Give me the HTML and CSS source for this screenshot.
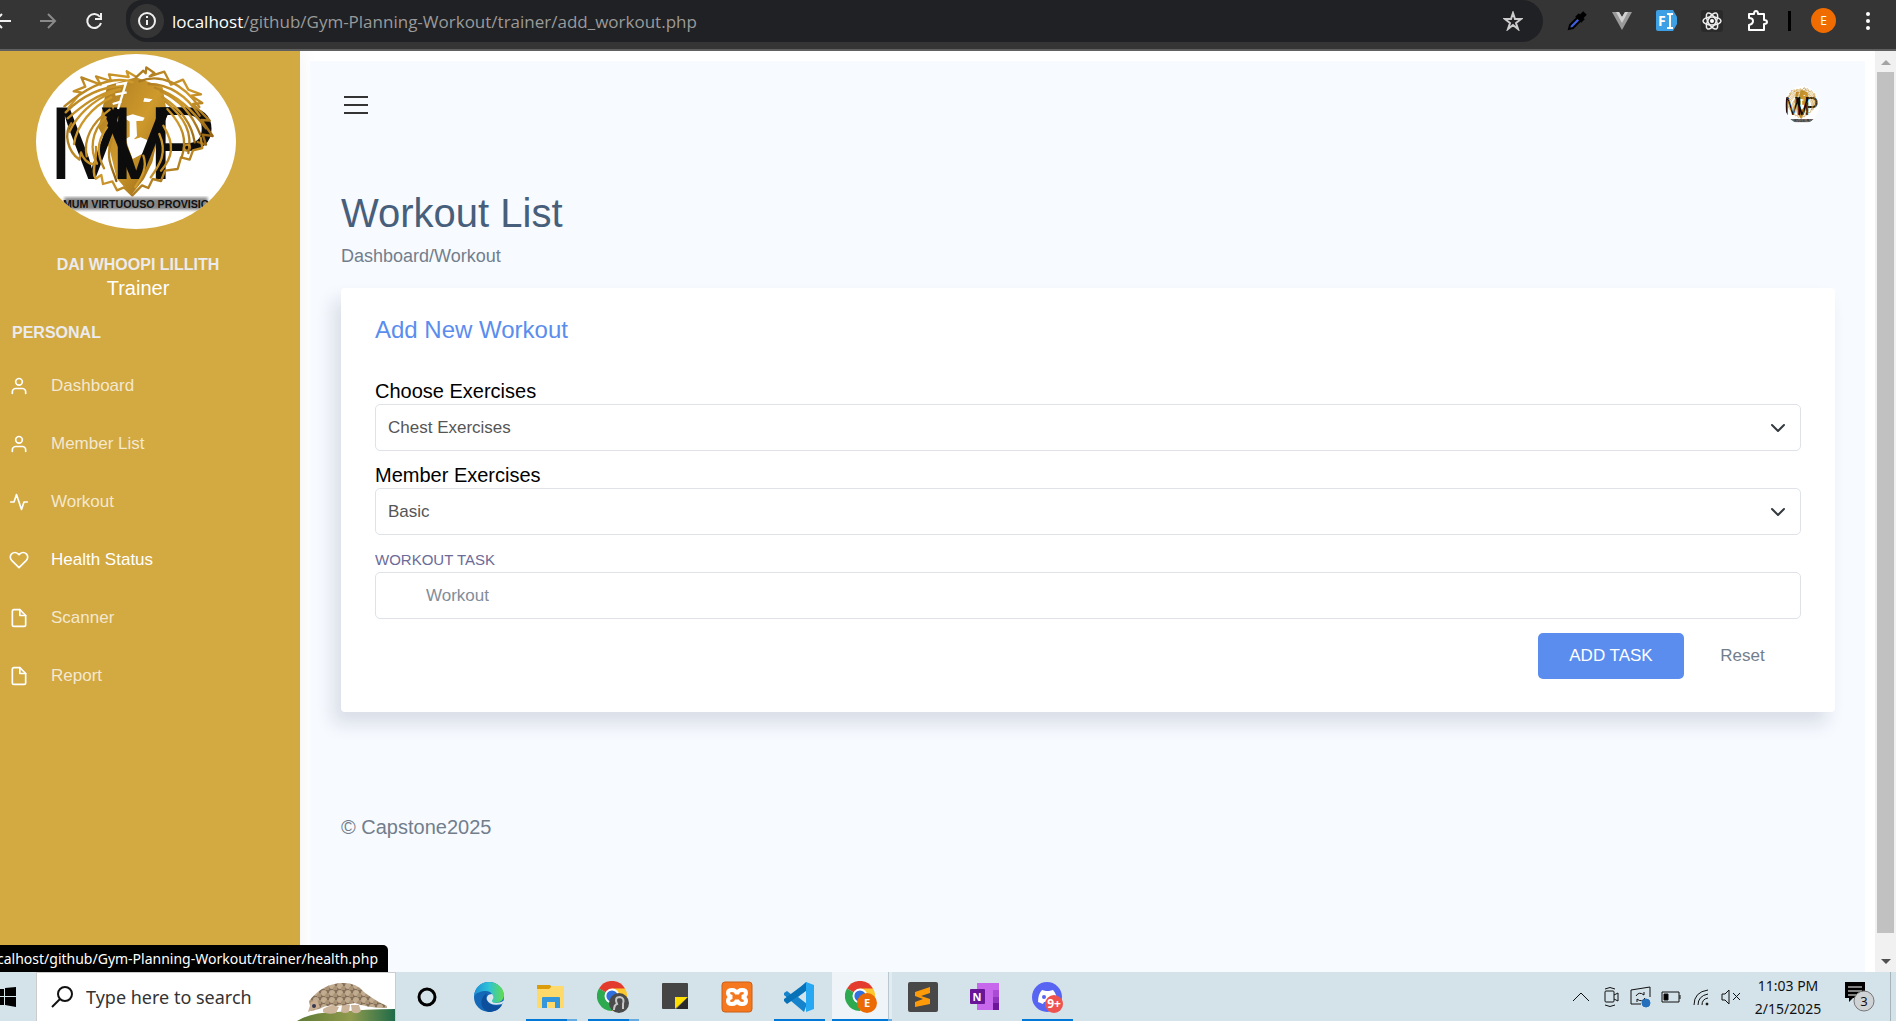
FILE: index.html
```html
<!DOCTYPE html>
<html lang="en">
<head>
<meta charset="utf-8">
<title>Workout List</title>
<link rel="stylesheet" href="styles.css">
</head>
<body>
<svg class="defs" aria-hidden="true">
  <defs>
    <linearGradient id="gold" x1="0" y1="0" x2="1" y2="1"><stop offset="0" stop-color="#a8781f"/><stop offset=".5" stop-color="#cf9a2c"/><stop offset="1" stop-color="#8d5d12"/></linearGradient>
    <linearGradient id="edgeTop" x1="0" y1="0" x2="1" y2="0"><stop offset="0" stop-color="#1b8fd8"/><stop offset=".5" stop-color="#2fc3d6"/><stop offset="1" stop-color="#62dc4c"/></linearGradient>
    <linearGradient id="hill" x1="0" y1="0" x2="1" y2="0"><stop offset="0" stop-color="#5d7a34"/><stop offset=".55" stop-color="#8f9a4d"/><stop offset="1" stop-color="#1f6b48"/></linearGradient>
    <pattern id="scales" width="8" height="7" patternUnits="userSpaceOnUse"><rect width="8" height="7" fill="#84705a"/><ellipse cx="3" cy="3" rx="3" ry="3" fill="#c2ac8f"/><ellipse cx="7" cy="6" rx="3" ry="3" fill="#a99275"/></pattern>
    <filter id="soft"><feGaussianBlur stdDeviation="5"/></filter>
    <symbol id="user" viewBox="0 0 24 24"><path d="M20 21v-2a4 4 0 0 0-4-4H8a4 4 0 0 0-4 4v2"/><circle cx="12" cy="7" r="4"/></symbol>
    <symbol id="file" viewBox="0 0 24 24"><path d="M13 2H6a2 2 0 0 0-2 2v16a2 2 0 0 0 2 2h12a2 2 0 0 0 2-2V9z"/><path d="M13 2v7h7"/></symbol>
    <symbol id="down" viewBox="0 0 16 16"><path d="m2 5 6 6 6-6"/></symbol>
    <symbol id="chrome" viewBox="0 0 32 32">
      <path d="M16 16 2.100 8A16 16 0 0 1 29.900 8z" fill="#e33b2e"/><path d="M16 16 2.100 8A16 16 0 0 0 16 32l7-12z" fill="#2da94f"/><path d="M16 8h13.900A16 16 0 0 1 16 32l7-12z" fill="#fdc82f"/>
      <circle cx="16" cy="16" r="8" fill="#fff"/><circle cx="16" cy="16" r="6" fill="#2f6fe0"/>
    </symbol>
    <symbol id="lion" viewBox="0 0 600 525">
      <rect width="600" height="525" fill="#fff"/>
      <path fill="url(#gold)" d="M213 95 300 70l80 30 14 85-25 50-20 90-25 50-38 48-44-50-22-90-32-60z"/>
      <path fill="#fff" d="m262 190 28-9 36 10-5 9-20 1 2 45-12 12-10-12v-43zM270 255l12-8 14 9 18-6 20 8-4 35-40 22-12-32zM325 132l25 4-10 8-18-1z"/>
      <g class="monogram"><text x="36" y="374">M</text><text x="196" y="374">V</text><text x="334" y="374">P</text></g>
      <g fill="none" stroke="url(#gold)" stroke-width="7" stroke-linecap="round" stroke-linejoin="round">
        <path d="m300 68-28-16 6 17-59-8 6 20-45-14 14 25-58-22 12 28-35 14 22 3-38 47"/>
        <path d="m300 70 22-20 7 8 2-18 24 17-14 10 44-14 20 39 36-15 16 30 38 14-30 4 34 22-28 3 50 50-25-2 34 48-30-4 10 30-25-8"/>
        <path d="M290 85c-55-20-120 0-205 72M270 93c-70 4-130 30-181 82M252 105c-73 16-113 50-157 88M233 114c-64 24-110 72-133 119M226 130c-58 28-104 84-112 140"/>
        <path d="M221 167c-64 48-77 98-69 140M209 190c-44 42-48 98-26 139M213 220c-37 49-26 90-9 123M228 255c-23 57 3 90 13 126"/>
        <path d="M106 208c-24 30-11 84 24 109l5-22c5 17 19 35 40 36M180 279c4 42-16 72-1 95l17-11 5 27 28-8 14 27 21-9 25 24 29-30 19 8 13-27 25 6 12-31 38-5 10-35 26 7 10-28 28-7-5-31"/>
        <path d="M310 82c65-26 130 7 180 77M338 90c65 1 115 37 153 95M356 101c67 22 112 66 154 122M374 112c66 28 99 79 119 130M378 128c54 35 90 81 98 137"/>
        <path d="M388 142c60 50 82 95 69 155M394 165c49 52 60 95 43 145M382 215c37 59 26 98-7 135M370 240c25 58 2 91-26 130M322 305c13 35-5 66-24 94"/>
        <circle cx="453" cy="281" r="9"/>
      </g>
      <path d="m240 92 30-5-24 78M238 122l34-7M230 150l27-8" fill="none" stroke="#fff" stroke-width="7"/>
      <rect x="85" y="430" width="430" height="38" fill="#555" opacity=".7" filter="url(#soft)"/>
      <text class="motto" x="300" y="463">MUM VIRTUOUSO PROVISIO</text>
    </symbol>
  </defs>
</svg>

<header class="browser">
  <nav class="browser-nav" aria-label="Browser">
    <button class="icon-button" aria-label="Back"><svg width="20" height="20" viewBox="0 0 20 20"><path d="M19 10H3M10 3l-7 7 7 7"/></svg></button>
    <button class="icon-button dim" aria-label="Forward"><svg width="20" height="20" viewBox="0 0 20 20"><path d="M2 10h15M10 3l7 7-7 7"/></svg></button>
    <button class="icon-button" aria-label="Reload"><svg width="20" height="20" viewBox="0 0 20 20"><path d="M16 6a7 7 0 1 0 1 6M17 2v6h-6"/></svg></button>
  </nav>
  <div class="address">
    <span class="site-info"><svg width="20" height="20" viewBox="0 0 20 20"><circle cx="10" cy="10" r="8"/><path d="M10 9v5M10 5v2"/></svg></span>
    <span class="url"><b>localhost</b>/github/Gym-Planning-Workout/trainer/add_workout.php</span>
    <svg class="star" width="20" height="20" viewBox="0 0 20 20"><path d="m10 2 2 6h6l-5 4 2 6-5-4-5 4 2-6-5-4h6z"/></svg>
  </div>
  <div class="extensions">
    <svg width="22" height="22" viewBox="0 0 22 22"><path d="m3 19 1-4 8-8 3 3-8 8z" fill="#3f5fe0" stroke="#000" stroke-width="2"/><path d="m11 5 6 6M14 8l5-5" stroke="#000" stroke-width="5"/></svg>
    <svg width="22" height="22" viewBox="0 0 22 22"><path d="M1 2h7l3 5 3-5h7L11 20z" fill="#9a9a9a"/><path d="M5 2h3l3 5 3-5h3l-6 11z" fill="#d0d0d0"/></svg>
    <svg width="22" height="22" viewBox="0 0 22 22"><path d="M2 0h15l4 7v7l-4 7H2q-2 0-2-2V2q0-2 2-2z" fill="#3ea0e4"/><text x="2" y="16" class="ext-letter">F</text><path d="M11 4h2l1 1 1-1h2M14 5v12M11 18h2l1-1 1 1h2" fill="none" stroke="#fff" stroke-width="2"/></svg>
    <svg width="22" height="22" viewBox="0 0 22 22"><rect width="22" height="22" rx="3" fill="#2a2a2a"/><g fill="none" stroke="#eee" stroke-width="1.500"><ellipse cx="11" cy="11" rx="9" ry="4"/><ellipse cx="11" cy="11" rx="9" ry="4" transform="rotate(60 11 11)"/><ellipse cx="11" cy="11" rx="9" ry="4" transform="rotate(120 11 11)"/></g><circle cx="11" cy="11" r="2" fill="#fff"/></svg>
    <svg width="22" height="22" viewBox="0 0 22 22"><path d="M3 4h5q0-3 2-3t2 3h6v6q3 0 3 2t-3 2v6H3v-5q4-1 4-4T3 8z" fill="none" stroke="#fff" stroke-width="2" stroke-linejoin="round"/></svg>
  </div>
  <span class="divider"></span>
  <span class="profile">E</span>
  <svg class="kebab" width="6" height="20" viewBox="0 0 6 20"><circle cx="3" cy="3" r="2"/><circle cx="3" cy="10" r="2"/><circle cx="3" cy="17" r="2"/></svg>
</header>

<div class="viewport">
  <aside class="sidebar">
    <div class="trainer">
      <svg class="portrait" viewBox="0 0 600 525" role="img" aria-label="Logo"><use href="#lion"/></svg>
      <strong>DAI WHOOPI LILLITH</strong>
      <span>Trainer</span>
    </div>
    <h2>PERSONAL</h2>
    <nav class="menu" aria-label="Personal">
      <a href="#"><svg viewBox="0 0 24 24"><use href="#user"/></svg>Dashboard</a>
      <a href="#"><svg viewBox="0 0 24 24"><use href="#user"/></svg>Member List</a>
      <a href="#"><svg viewBox="0 0 24 24"><path d="M22 12h-4l-3 9L9 3l-3 9H2"/></svg>Workout</a>
      <a href="#" class="hovered"><svg viewBox="0 0 24 24"><path d="M20.840 4.610a5.500 5.500 0 0 0-7.780 0L12 5.670l-1.060-1.060a5.500 5.500 0 0 0-7.780 7.780L12 21.230l8.840-8.840a5.500 5.500 0 0 0 0-7.780z"/></svg>Health Status</a>
      <a href="#"><svg viewBox="0 0 24 24"><use href="#file"/></svg>Scanner</a>
      <a href="#"><svg viewBox="0 0 24 24"><use href="#file"/></svg>Report</a>
    </nav>
  </aside>
  <main class="page">
    <div class="topbar">
      <button class="hamburger" aria-label="Toggle menu"><svg width="26" height="20" viewBox="0 0 26 20"><path d="M1 2h24M1 10h24M1 18h24"/></svg></button>
      <svg class="avatar" viewBox="50 20 500 470" preserveAspectRatio="none" role="img" aria-label="Account"><use href="#lion" width="600" height="525"/></svg>
    </div>
    <h1>Workout List</h1>
    <p class="crumbs">Dashboard/Workout</p>
    <form class="card">
      <h3>Add New Workout</h3>
      <label for="exercise">Choose Exercises</label>
      <div class="select"><select id="exercise"><option>Chest Exercises</option></select><svg width="16" height="16"><use href="#down"/></svg></div>
      <label for="level">Member Exercises</label>
      <div class="select"><select id="level"><option>Basic</option></select><svg width="16" height="16"><use href="#down"/></svg></div>
      <label for="task" class="small-label">WORKOUT TASK</label>
      <input id="task" type="text" placeholder="Workout">
      <div class="actions"><button type="button" class="primary">ADD TASK</button><button type="reset" class="plain">Reset</button></div>
    </form>
    <footer>© Capstone2025</footer>
  </main>
  <div class="scrollbar" aria-hidden="true">
    <svg width="10" height="5" viewBox="0 0 10 5"><path d="m0 5 5-5 5 5z" fill="#a3a3a3"/></svg>
    <span class="thumb"></span>
    <svg width="10" height="5" viewBox="0 0 10 5"><path d="m0 0 5 5 5-5z" fill="#505050"/></svg>
  </div>
  <div class="status"><span>calhost/github/Gym-Planning-Workout/trainer/health.php</span></div>
</div>

<footer class="taskbar">
  <button class="start" aria-label="Start"><svg width="16" height="20" viewBox="0 0 16 20"><path d="M0 2h4v7H0zM5 1l11-1v9H5zM0 10h4v8H0zM5 10h11v10L5 18z"/></svg></button>
  <label class="search"><svg width="22" height="22" viewBox="0 0 22 22"><circle cx="14" cy="8" r="7"/><path d="m9 13-8 8"/></svg><input type="search" placeholder="Type here to search">
    <svg class="pangolin" width="98" height="38" viewBox="0 0 98 38"><path d="M0 38q14-9 40-9 30-3 58-3v12z" fill="url(#hill)"/><path d="M26 26q8-6 16-2l-3 6q-8 2-13-1zM45 22h8l-1 7q-4 2-8 0zM54 22h8l2 6q-4 4-9 1z" fill="#cdb59b"/><path d="M12 18Q26 0 46 0q14 0 21 9 10 8 23 14v2q-20 0-32-5-12 3-20 3-8-2-16 3l-8 2z" fill="url(#scales)"/><path d="m11 29 3-10 6-2 3 7z" fill="#c9ae91"/><circle cx="17" cy="23" r="2" fill="#333852"/></svg>
  </label>
  <div class="apps">
    <button aria-label="Cortana"><svg viewBox="0 0 32 32"><circle cx="16" cy="16" r="8" fill="none" stroke="#000" stroke-width="3"/></svg></button>
    <button aria-label="Edge"><svg viewBox="0 0 32 32"><circle cx="16" cy="16" r="15" fill="#1468b8"/><path d="M1 15C2 6 8 1 16 1s15 6 15 13c0 5-4 8-9 8-4 0-5-2-3-4 2-4-1-8-6-8S3 12 1 15z" fill="url(#edgeTop)"/><path d="M14 12c-3 7 2 15 15 12-3 5-8 7-13 7-8-2-11-13-2-19z" fill="#0c4f9c"/><path d="M19 13c-4 0-6 3-5 6 2 4 7 6 15 4l3-4c-3 2-6 3-9 3-4 0-5-2-3-4 1-2 0-4-1-5z" fill="#dbe7ec"/></svg></button>
    <button aria-label="File Explorer" class="open many"><svg viewBox="0 0 32 32"><path d="M2 4h13l3 4H2z" fill="#dc9b08"/><path d="M2 8h12l3-3h12v22H2z" fill="#ffd969"/><path d="M7 27V17q0-1 1-1h16q1 0 1 1v10h-5v-6h-8v6z" fill="#3696dc"/></svg></button>
    <button aria-label="Chrome" class="open many"><svg viewBox="0 0 32 32"><use href="#chrome" x="0" y="0" width="30" height="30"/><circle cx="22" cy="22" r="10" fill="#4b4b4b"/><path d="M17 29q0-5 3-6-3-7 3-7 5 1 3 7v5" fill="none" stroke="#c6c6c6" stroke-width="2"/></svg></button>
    <button aria-label="Sticky Notes"><svg viewBox="0 0 32 32"><path d="M4 2h24q1 0 1 1v13L17 28H4q-1 0-1-1V3q0-1 1-1z" fill="#454545"/><path d="M16 28V16h13z" fill="#ffe000"/><path d="M29 16v12H17z" fill="#2b2b2b"/></svg></button>
    <button aria-label="XAMPP"><svg viewBox="0 0 32 32"><rect x="1" y="1" width="30" height="30" rx="3" fill="#f5781f" stroke="#c95f18"/><path d="M11 9q-4 0-4 3t4 4q-4 1-4 4t4 3 5-4q1 4 5 4t4-3-4-4q4-1 4-4t-4-3-5 4q-1-4-5-4z" fill="none" stroke="#fff" stroke-width="4"/></svg></button>
    <button aria-label="Visual Studio Code" class="open"><svg viewBox="0 0 32 32"><path d="M23 1 9 14 4 10 1 12v2l20 17 3-8-9-7 9-7z" fill="#1684cd"/><path d="m1 20 3 3L24 9V1L1 18z" fill="#0872b8"/><path d="m23 1 8 3v24l-8 3z" fill="#27a8f2"/></svg></button>
    <button aria-label="Chrome, profile E" class="open many active"><svg viewBox="0 0 32 32"><use href="#chrome" x="0" y="0" width="30" height="30"/><circle cx="22" cy="22" r="10" fill="#ec6a04"/><text x="22" y="26" class="badge-letter">E</text></svg></button>
    <button aria-label="Sublime Text"><svg viewBox="0 0 32 32"><rect x="1" y="1" width="30" height="30" rx="2" fill="#484848"/><path d="m8 11 15-5v6l-9 3 9 3v5L8 26v-5l8-3-8-3z" fill="#ff9a08"/></svg></button>
    <button aria-label="OneNote"><svg viewBox="0 0 32 32"><path d="M8 2h22v27H8z" fill="#c767eb"/><path d="M24 9h6v7h-6z" fill="#a94bd4"/><path d="M24 16h6v7h-6z" fill="#8e35be"/><path d="M24 22h6v7h-6z" fill="#6c169a"/><rect x="1" y="8" width="15" height="15" rx="1" fill="#6a1598"/><text x="8" y="20" class="badge-letter">N</text></svg></button>
    <button aria-label="Discord" class="open"><svg viewBox="0 0 32 32"><circle cx="16" cy="16" r="15" fill="#5865f2"/><path d="M7 21q0-8 4-12l4 1h3l4-1q4 4 4 12l-5 2-1-2h-7l-1 2z" fill="#fff"/><circle cx="13" cy="16" r="2" fill="#5865f2"/><circle cx="23" cy="23" r="9" fill="#ef5350"/><text x="23" y="27" class="badge-count">9+</text></svg></button>
  </div>
  <div class="tray">
    <svg viewBox="0 0 22 22"><path d="m3 15 8-8 8 8"/></svg>
    <svg viewBox="0 0 22 22"><rect x="5" y="5" width="9" height="11" rx="1"/><path d="m14 9 4-2v8l-4-2M5 3q5-3 10 0M5 19q5 3 10 0"/></svg>
    <svg viewBox="0 0 22 22"><path d="M11 18H1V4l19-3v10"/><path d="M6 10q3-5 8-1V6M15 12q-3 5-8 1v3"/><circle cx="16" cy="17" r="4" fill="#2570bd" stroke="#2570bd"/></svg>
    <svg viewBox="0 0 22 22"><path d="M2 6h17v10H2zM20 9v4"/><path d="M4 8h4v6H4z" fill="#000"/></svg>
    <svg viewBox="0 0 22 22"><path d="M4 19Q4 6 18 4M8 19q0-9 10-11M12 19q0-6 6-7"/><circle cx="17" cy="18" r="1" fill="#000"/></svg>
    <svg viewBox="0 0 22 22"><path d="M2 8h3l4-4v14l-4-4H2zM13 7l7 7M20 7l-7 7"/></svg>
    <div class="clock"><span>11:03 PM</span><span>2/15/2025</span></div>
    <svg class="notes" viewBox="0 0 32 32"><path d="M1 1h20v16H9l-4 4v-4H1z" fill="#000" stroke="none"/><path d="M4 6h14M4 10h14M4 14h8" stroke="#fff"/><circle cx="20" cy="20" r="10" fill="#cfd3d6" stroke="#777"/><text x="20" y="25" class="note-count">3</text></svg>
    <span class="show-desktop"></span>
  </div>
</footer>
</body>
</html>
```
FILE: styles.css
```css
* { box-sizing: border-box; }
body {
  margin: 0;
  height: 100vh;
  display: flex;
  flex-direction: column;
  overflow: hidden;
  font-family: "Liberation Sans", Arial, sans-serif;
  background: #fff;
}
button { border: 0; padding: 0; background: none; font: inherit; }
svg { flex: none; }
.defs { position: absolute; width: 0; height: 0; }

/* Browser toolbar */
.browser {
  display: flex;
  align-items: flex-start;
  height: 51px;
  flex: none;
  background: #353535;
  border-bottom: 2px solid #606060;
  font-family: "Open Sans", sans-serif;
}
.browser-nav { display: flex; gap: 26px; width: 126px; height: 42px; flex: none; align-items: center; margin-left: -8px; }
.icon-button { display: flex; }
.icon-button svg, .site-info svg, .star { fill: none; stroke: #f0f0f0; stroke-width: 2; }
.icon-button.dim svg { stroke: #8a8a8a; }
.address {
  flex: 1;
  height: 42px;
  margin-left: 8px;
  padding: 0 20px 0 4px;
  display: flex;
  align-items: center;
  background: #202124;
  border-radius: 16px 21px 21px 21px;
}
.site-info { display: grid; place-items: center; width: 34px; height: 34px; border-radius: 17px; background: #353535; }
.url { flex: 1; margin-left: 8px; font-size: 17px; color: #9a9a9a; white-space: nowrap; }
.url b { font-weight: 400; color: #fff; }
.star { stroke: #ccc; }
.extensions { display: flex; align-items: center; gap: 23px; height: 42px; margin-left: 23px; }
.ext-letter { font: 700 14px "Noto Sans", sans-serif; fill: #fff; }
.divider { width: 3px; height: 20px; margin: 11px 20px 0 20px; background: #000; }
.profile { width: 25px; height: 25px; margin-top: 8px; border-radius: 50%; background: #f06c00; color: #fff; font-size: 12px; line-height: 25px; text-align: center; }
.kebab { margin: 11px 25px 0 29px; fill: #fff; }

/* Page */
.viewport { position: relative; flex: 1; min-height: 0; display: flex; overflow: hidden; }
.sidebar { width: 300px; flex: none; background: #d3a941; box-shadow: 0 0 20px rgba(0, 0, 0, .06); color: #fff; }
.trainer { width: 276px; display: flex; flex-direction: column; align-items: center; padding-top: 3px; }
.portrait { width: 200px; height: 175px; border-radius: 50%; margin: 0 4px 26px 0; }
.trainer strong { font-size: 16px; line-height: 20px; color: #ebebf0; }
.trainer span { font-size: 20px; line-height: 26px; }
.sidebar h2 { margin: 20px 0 12px 12px; font-size: 16px; line-height: 24px; color: #ebebf0; }
.menu a { display: flex; align-items: center; gap: 22px; height: 58px; padding-left: 9px; color: rgba(255, 255, 255, .75); font-size: 17px; text-decoration: none; }
.menu a.hovered { color: #fff; }
.menu svg { width: 20px; height: 20px; fill: none; stroke: #fff; stroke-width: 2; stroke-linecap: round; stroke-linejoin: round; }
.page { flex: 1; min-width: 0; margin: 10px 10px 0; padding: 24px 30px 0 31px; background: #f7faff; }
.monogram { font: 314px "Liberation Sans", sans-serif; fill: #0c0c0c; }
.motto { font: 700 32px "Liberation Sans", sans-serif; fill: #111; text-anchor: middle; }
.topbar { display: flex; align-items: center; justify-content: space-between; height: 40px; padding: 0 16px 0 2px; }
.hamburger { display: flex; }
.hamburger svg { fill: none; stroke: #333; stroke-width: 2; }
.avatar { width: 34px; height: 38px; border-radius: 50%; }
h1 { margin: 64px 0 0; font-size: 40px; line-height: 48px; font-weight: 400; color: #475f7b; }
.crumbs { margin: 6px 0 18px; font-size: 18px; line-height: 27px; color: #727e8c; }
.card { display: flex; flex-direction: column; padding: 28px 34px 33px; background: #fff; border-radius: 4px; box-shadow: -8px 12px 18px 0 rgba(25, 42, 70, .13); }
.card h3 { margin: 0 0 35px; font-size: 24px; line-height: 28px; font-weight: 400; color: #5a8dee; }
.card label { font-size: 20px; line-height: 25px; color: #000; }
.card .small-label { font-size: 15px; color: #6b6b99; }
.select { display: grid; align-items: center; margin-bottom: 12px; }
.select > * { grid-area: 1 / 1; }
.select svg { justify-self: end; margin-right: 15px; pointer-events: none; fill: none; stroke: #343a40; stroke-width: 2; stroke-linecap: round; stroke-linejoin: round; }
.card select, .card input {
  appearance: none;
  width: 100%;
  height: 47px;
  padding: 0 12px;
  border: 1px solid #dfe3e7;
  border-radius: 5px;
  background: #fff;
  font: 17px "Liberation Sans", Arial, sans-serif;
  color: #555;
}
.card input { padding-left: 50px; }
.card input::placeholder { color: #828d99; }
.actions { display: flex; justify-content: flex-end; margin-top: 14px; font-size: 17px; }
.primary { width: 146px; height: 46px; border-radius: 5px; background: #5a8dee; color: #fff; }
.plain { width: 117px; color: #727e8c; }
.page footer { margin-top: 100px; font-size: 20px; line-height: 30px; color: #727e8c; }

.scrollbar { width: 21px; flex: none; display: flex; flex-direction: column; align-items: center; background: #f1f1f1; padding: 9px 0 8px; }
.thumb { flex: 1; width: 17px; margin: 7px 0 26px; background: #c1c1c1; }
.status { position: absolute; left: 0; bottom: 0; width: 388px; height: 27px; display: flex; justify-content: flex-end; padding-right: 10px; overflow: hidden; border-radius: 0 5px 0 0; background: #000; color: #fff; font: 14px/27px "Noto Sans", sans-serif; white-space: nowrap; }

/* Taskbar */
.taskbar { display: flex; height: 49px; flex: none; background: #d4e3e9; font-family: "Noto Sans", sans-serif; }
.start { width: 36px; display: flex; align-items: center; }
.search { width: 360px; display: flex; align-items: center; gap: 13px; padding-left: 14px; background: #fff; border: 1px solid #ccc; border-bottom: 0; }
.search > svg:first-child { fill: none; stroke: #111; stroke-width: 2; }
.search input { flex: 1; min-width: 0; border: 0; padding: 0; background: none; font: 18px "Noto Sans", sans-serif; }
.search input::placeholder { color: #333; }
.pangolin { align-self: flex-end; }
.apps { display: flex; flex: 1; }
.apps button { position: relative; width: 62px; display: grid; place-items: center; }
.apps button svg { width: 32px; height: 32px; }
.apps .open::after { content: ""; position: absolute; left: 6px; bottom: 0; width: 51px; height: 2px; background: #0078d7; }
.apps .many::after { background: linear-gradient(90deg, #0078d7 41px, #66ace3 41px); }
.apps .active { background: linear-gradient(90deg, transparent 2px, #eef4f7 2px, #eef4f7 58px, #b8c8d0 58px, #b8c8d0 59px, #e2ecf0 59px); }
.apps .active::after { left: 2px; width: 60px; background: linear-gradient(90deg, #0078d7 56px, #66ace3 56px); }
.badge-letter { font: 700 11px "Noto Sans", sans-serif; fill: #fff; text-anchor: middle; }
.badge-count { font: 700 12px "Noto Sans", sans-serif; fill: #fff; text-anchor: middle; }
.tray { display: flex; align-items: center; gap: 8px; }
.tray > svg { width: 22px; height: 22px; fill: none; stroke: #111; stroke-width: 1; }
.clock { width: 70px; margin: 0 13px 0 3px; display: flex; flex-direction: column; font-size: 14px; line-height: 23px; text-align: center; color: #111; }
.tray .notes { width: 32px; height: 32px; }
.note-count { font: 13px "Noto Sans", sans-serif; fill: #111; stroke: none; text-anchor: middle; }
.show-desktop { width: 1px; height: 49px; margin: 0 5px 0 6px; background: #a5b2b8; }
```
